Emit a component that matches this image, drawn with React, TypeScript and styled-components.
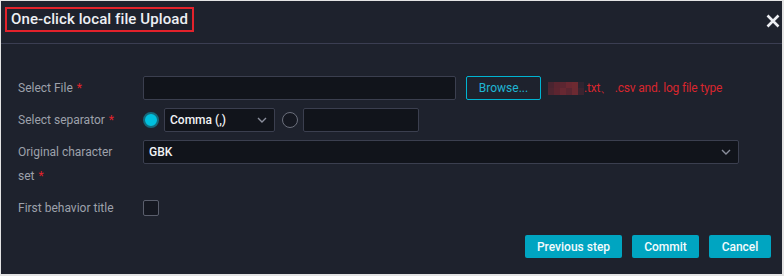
import React from "react";
import styled, { createGlobalStyle } from "styled-components";

const Global = createGlobalStyle`
  html, body { margin: 0; padding: 0; background: #e6e6e6; }
  body { font-family: Roboto, "Noto Sans", "Liberation Sans", sans-serif; }
  * { box-sizing: border-box; }
`;

const Frame = styled.div`
  width: 784px;
  height: 276px;
  padding: 1px 2px 2px 1px;
  background: #e4e4e4;
`;

const Panel = styled.div`
  width: 781px;
  height: 273px;
  background: #1e222d;
  display: flex;
  flex-direction: column;
`;

const Header = styled.div`
  height: 43px;
  border-bottom: 1px solid #3b3e52;
  display: flex;
  align-items: flex-start;
  justify-content: space-between;
  padding: 6px 2px 0 4px;
`;

const Title = styled.span`
  border: 2px solid #e3222b;
  color: #eef0f4;
  font-size: 15px;
  font-weight: 500;
  line-height: 21px;
  padding: 0 4px 0 4px;
  letter-spacing: 0.1px;
`;

const Close = styled.button`
  background: none;
  border: 0;
  padding: 0;
  margin-top: 7px;
  width: 14px;
  height: 14px;
  display: flex;
`;

const Body = styled.div`
  padding: 32px 0 0 17px;
  display: flex;
  flex-direction: column;
  gap: 8px;
`;

const Row = styled.div`
  display: flex;
  align-items: flex-start;
`;

const Label = styled.div`
  width: 125px;
  color: #9da1ab;
  font-size: 12px;
  line-height: 24px;
`;

const Star = styled.span`
  color: #e3222b;
  margin-left: 4px;
`;

const Field = styled.div`
  display: flex;
  align-items: center;
  height: 24px;
`;

const Input = styled.div<{ w: number; ml?: number }>`
  width: ${(p) => p.w}px;
  margin-left: ${(p) => p.ml ?? 0}px;
  height: 24px;
  background: #11141b;
  border: 1px solid #3b3f4f;
  border-radius: 2px;
`;

const Select = styled.div<{ w: number; ml?: number }>`
  width: ${(p) => p.w}px;
  margin-left: ${(p) => p.ml ?? 0}px;
  height: 24px;
  background: #11141b;
  border: 1px solid #3b3f4f;
  border-radius: 2px;
  display: flex;
  align-items: center;
  justify-content: space-between;
  padding: 0 7px 0 5px;
  color: #f2f3f6;
  font-size: 12px;
  font-weight: 500;
`;

const BrowseBtn = styled.button`
  margin-left: 10px;
  width: 75px;
  height: 24px;
  background: transparent;
  border: 1px solid #00b4d2;
  border-radius: 2px;
  color: #1fb6d4;
  font-family: inherit;
  font-size: 12px;
  padding: 0;
`;

const Hint = styled.span`
  margin-left: 7px;
  display: flex;
  align-items: center;
  color: #d8262e;
  font-size: 12px;
  letter-spacing: -0.2px;
`;

const Mosaic = styled.span`
  display: grid;
  grid-template-columns: repeat(6, 6px);
  grid-template-rows: repeat(2, 6.5px);
`;

const Tile = styled.span<{ c: string }>`
  background: ${(p) => p.c};
`;

const Radio = styled.span<{ on?: boolean; ml?: number }>`
  width: 16px;
  height: 16px;
  margin-left: ${(p) => p.ml ?? 0}px;
  border-radius: 50%;
  flex: none;
  border: ${(p) => (p.on ? "2px solid #146a7c" : "1px solid #6b6f7c")};
  background: ${(p) => (p.on ? "#00c0de" : "#151821")};
`;

const Check = styled.span`
  width: 16px;
  height: 16px;
  margin-top: 4px;
  border: 1px solid #5a5e6c;
  border-radius: 2px;
  background: #151821;
`;

const Footer = styled.div`
  margin-top: 15px;
  display: flex;
  justify-content: flex-end;
  gap: 10px;
  padding-right: 11px;
`;

const Btn = styled.button<{ w: number }>`
  width: ${(p) => p.w}px;
  height: 23px;
  border: 0;
  border-radius: 2px;
  background: #00a5c1;
  color: #f4fbfd;
  font-family: inherit;
  font-size: 12px;
  font-weight: 500;
  padding: 0;
`;

const Chevron = () => (
  <svg width="10" height="6" viewBox="0 0 10 6">
    <path d="M1 1 L5 5 L9 1" fill="none" stroke="#8a8e9c" strokeWidth="1.4" />
  </svg>
);

const tiles = [
  "#4a2430", "#5a2530", "#5c2631", "#6a2832", "#6e2a31", "#2e2430",
  "#4e2530", "#5c2530", "#672832", "#5a2631", "#6c2a32", "#3a2430",
];

export default function App() {
  return (
    <>
      <Global />
      <Frame>
        <Panel>
          <Header>
            <Title>One-click local file Upload</Title>
            <Close aria-label="close">
              <svg width="14" height="14" viewBox="0 0 14 14">
                <path d="M1.5 1.5 L12.5 12.5 M12.5 1.5 L1.5 12.5" stroke="#eceef2" strokeWidth="2.6" />
              </svg>
            </Close>
          </Header>
          <Body>
            <Row>
              <Label>
                Select File<Star>*</Star>
              </Label>
              <Field>
                <Input w={313} />
                <BrowseBtn>Browse...</BrowseBtn>
                <Hint>
                  <Mosaic>
                    {tiles.map((c, i) => (
                      <Tile key={i} c={c} />
                    ))}
                  </Mosaic>
                  .txt、 .csv and. log file type
                </Hint>
              </Field>
            </Row>
            <Row>
              <Label>
                Select separator<Star>*</Star>
              </Label>
              <Field>
                <Radio on />
                <Select w={111} ml={5}>
                  <span>Comma (,)</span>
                  <Chevron />
                </Select>
                <Radio ml={7} />
                <Input w={116} ml={5} />
              </Field>
            </Row>
            <Row>
              <Label>
                Original character
                <br />
                set<Star>*</Star>
              </Label>
              <Field>
                <Select w={596}>
                  <span>GBK</span>
                  <Chevron />
                </Select>
              </Field>
            </Row>
            <Row>
              <Label>First behavior title</Label>
              <Check />
            </Row>
          </Body>
          <Footer>
            <Btn w={97}>Previous step</Btn>
            <Btn w={67}>Commit</Btn>
            <Btn w={62}>Cancel</Btn>
          </Footer>
        </Panel>
      </Frame>
    </>
  );
}
